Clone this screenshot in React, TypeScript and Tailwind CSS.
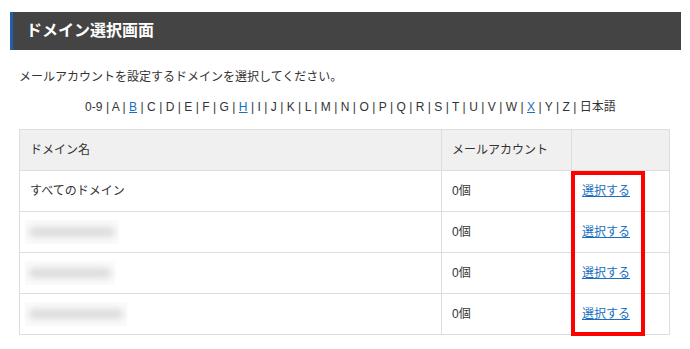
const letters = ["0-9", "A", "B", "C", "D", "E", "F", "G", "H", "I", "J", "K", "L", "M", "N", "O", "P", "Q", "R", "S", "T", "U", "V", "W", "X", "Y", "Z", "日本語"];
const linked = ["B", "H", "X"];

const rows = [
	{ name: "すべてのドメイン", blur: 0 },
	{ name: "", blur: 94 },
	{ name: "", blur: 90 },
	{ name: "", blur: 102 },
];

const App: React.FC = () => {
	return (
		<div
			className="w-[690px] h-[349px] bg-white text-[12px] text-[#333]"
			style={{ fontFamily: '"Liberation Sans", "Noto Sans CJK JP", sans-serif' }}
		>
			<div className="pt-[12px] pl-[10px] pr-[9px]">
				<div className="h-[38px] bg-[#444] border-l-[3px] border-[#1f5fae] flex items-center pl-[13px]">
					<h1 className="text-white text-[16px] font-bold leading-none">ドメイン選択画面</h1>
				</div>
			</div>

			<div className="pl-[19px] pr-[20px]">
				<p className="mt-[18px] leading-[18px]">メールアカウントを設定するドメインを選択してください。</p>

				<p className="mt-[12px] leading-[18px] text-center pl-[12px] tracking-[0.04px]">
					{letters.map((l, i) => (
						<span key={l}>
							{linked.includes(l) ? (
								<a href="#" className="text-[#1a6ec0] underline">{l}</a>
							) : (
								<span>{l}</span>
							)}
							{i < letters.length - 1 && <span> | </span>}
						</span>
					))}
				</p>

				<div className="relative mt-[13px] w-[651px] border border-[#ddd]">
					<div className="flex h-[41px] bg-[#f0f0f0] border-b border-[#ddd]">
						<div className="w-[422px] border-r border-[#ddd] flex items-center pl-[10px]">ドメイン名</div>
						<div className="w-[130px] border-r border-[#ddd] flex items-center pl-[10px]">メールアカウント</div>
						<div className="flex-1"></div>
					</div>
					{rows.map((r, i) => (
						<div key={i} className={i < rows.length - 1 ? "flex h-[41px] border-b border-[#ddd]" : "flex h-[40px]"}>
							<div className="w-[422px] border-r border-[#ddd] flex items-center pl-[10px]">
								{r.blur ? (
									<div className="-ml-[5px] h-[24px] bg-[#fafafa] flex items-center px-[4px]" style={{ width: r.blur }}>
										<div className="w-full h-[10px] rounded-full bg-[#dcdcdc] blur-[3px]"></div>
									</div>
								) : (
									r.name
								)}
							</div>
							<div className="w-[130px] border-r border-[#ddd] flex items-center pl-[10px]">0個</div>
							<div className="flex-1 flex items-center pl-[10px]">
								<a href="#" className="text-[#1a6ec0] underline">選択する</a>
							</div>
						</div>
					))}
					<div className="absolute left-[551px] top-[41px] w-[74px] h-[165px] border-4 border-[#ff0000] pointer-events-none"></div>
				</div>
			</div>
		</div>
	);
};

export default App;
